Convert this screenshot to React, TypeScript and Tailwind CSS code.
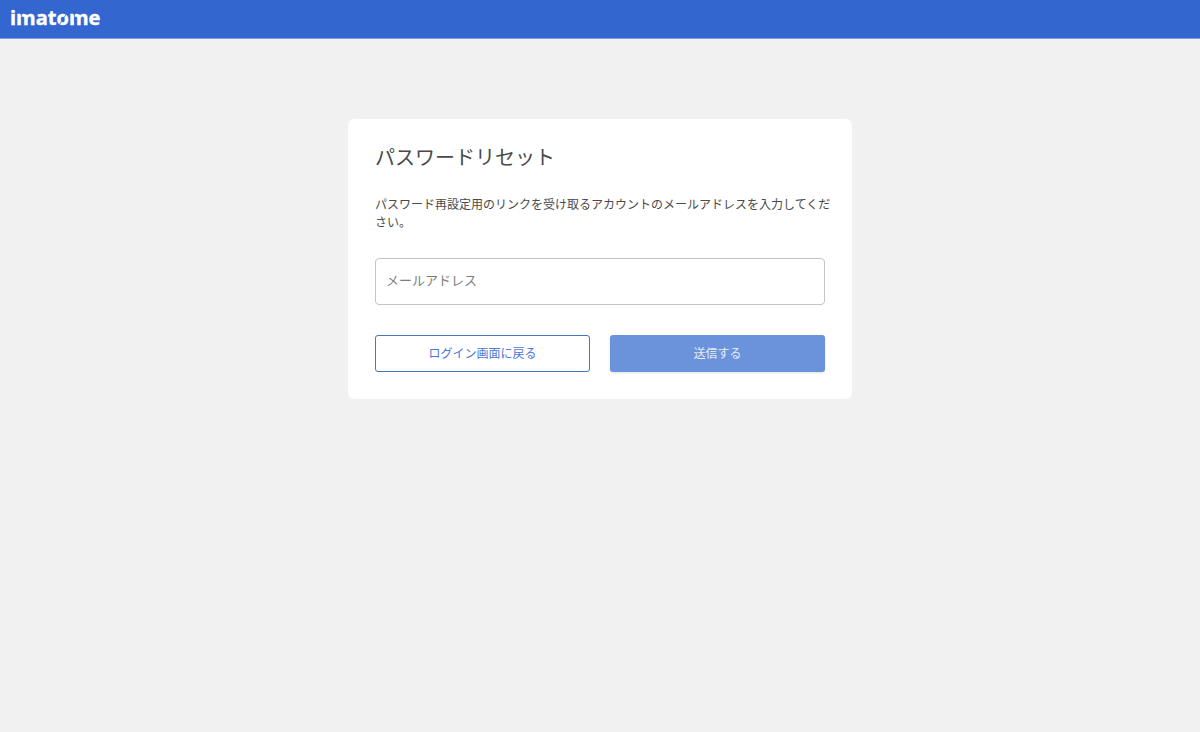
import { useState } from "react";

function Logo() {
  return (
    <a href="#" aria-label="imatome" className="inline-flex">
      <svg width="104" height="30" viewBox="0 0 104 30" aria-hidden="true">
        <text
          x="2"
          y="21"
          fill="#fff"
          stroke="#fff"
          strokeWidth="0.4"
          className="font-['Open_Sans',sans-serif] text-[20px] font-bold"
        >
          imatome
        </text>
        {/* stencil cuts in the m and o */}
        <g stroke="#3367cf" strokeWidth="0.8">
          <path d="M13.4 9v6" />
          <path d="M66.4 9v6" />
          <path d="M58.5 10l-2.5 3.5" />
          <path d="M53.5 17.5l-2.5 3.5" />
        </g>
      </svg>
    </a>
  );
}

function Header() {
  return (
    <header className="flex h-[39px] items-start border-b border-[#7c9fe0] bg-[#3367cf] px-2 pt-1">
      <Logo />
    </header>
  );
}

function ResetForm() {
  const [email, setEmail] = useState("");

  return (
    <form
      className="w-full max-w-[504px] rounded-md bg-white px-[27px] pt-6 pb-[27px]"
      onSubmit={(e) => e.preventDefault()}
    >
      <h1 className="text-xl leading-7">パスワードリセット</h1>
      <p className="-mr-2 mt-6 text-xs leading-[18px]">
        パスワード再設定用のリンクを受け取るアカウントのメールアドレスを入力してください。
      </p>
      <input
        type="email"
        aria-label="メールアドレス"
        placeholder="メールアドレス"
        value={email}
        onChange={(e) => setEmail(e.target.value)}
        className="mt-[27px] block h-[47px] w-full rounded border border-[#c4c4c4] px-[10px] pb-1 text-[13px] placeholder:text-[#7d7d7d]"
      />
      <div className="mt-[30px] grid grid-cols-2 gap-5 text-xs">
        <button
          type="button"
          className="h-[37px] rounded-[3px] border border-[#4474c4] pb-[2px] text-[#4a78d4]"
        >
          ログイン画面に戻る
        </button>
        <button
          type="submit"
          className="h-[37px] rounded-[3px] bg-[#6b93dc] pb-[2px] text-[#e6edf9] shadow"
        >
          送信する
        </button>
      </div>
    </form>
  );
}

function App() {
  return (
    <div className="min-h-screen bg-[#f1f1f1] font-['Noto_Sans_CJK_JP',sans-serif] text-[#4a4a4a]">
      <Header />
      <main className="flex justify-center px-4 pt-20">
        <ResetForm />
      </main>
    </div>
  );
}

export default App;
